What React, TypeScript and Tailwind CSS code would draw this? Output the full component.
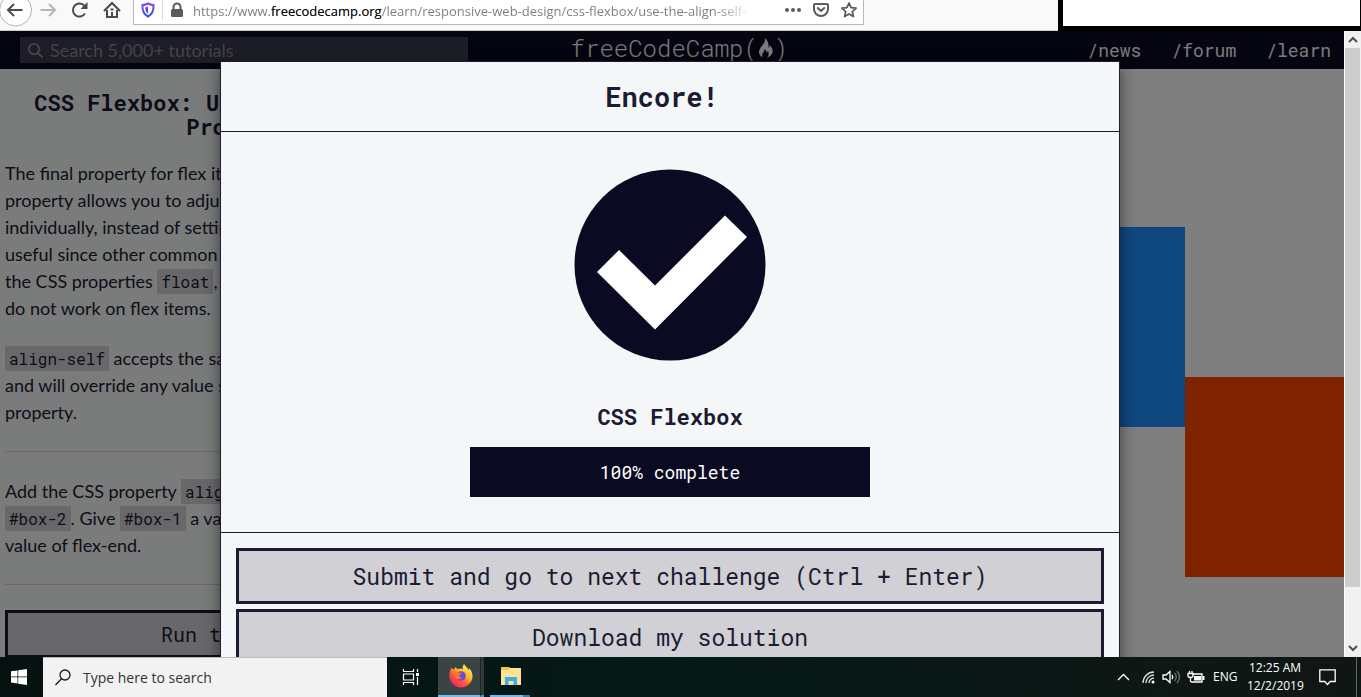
import type { ReactNode } from "react";

const mono = "font-['Roboto_Mono','Liberation_Mono',monospace]";
const ui = "font-['Open_Sans','Noto_Sans',sans-serif]";

function Code({ children }: { children: ReactNode }) {
  return (
    <code className={`${mono} bg-[#d0d0d5] px-1 py-[2px] text-base text-[#1b1b32]`}>{children}</code>
  );
}

function BrowserBar() {
  return (
    <header className="flex h-[31px] overflow-hidden bg-[#f9f9fa]">
      <div className="flex min-w-0 flex-1 items-start border-b border-[#ccc]">
        <nav className="flex w-[133px] shrink-0 items-start" aria-label="Browser">
          <button type="button" aria-label="Back" className="h-7 w-8">
            <svg width="32" height="28" viewBox="0 0 32 28" fill="none">
              <circle cx="15.500" cy="10" r="16" fill="#fff" stroke="#b1b1b3" />
              <path d="M22.500 10H8.500M14 4l-6 6 6 6" stroke="#4a4a4f" strokeWidth="2" />
            </svg>
          </button>
          <button type="button" aria-label="Forward" className="h-5 w-8">
            <svg width="32" height="20" viewBox="0 0 32 20" fill="none">
              <path d="M8.500 10h14M17 4l6 6-6 6" stroke="#b5b5b7" strokeWidth="2" />
            </svg>
          </button>
          <button type="button" aria-label="Reload" className="h-5 w-8">
            <svg width="32" height="20" viewBox="0 0 32 20" fill="none">
              <path d="M21 13.500A6.500 6.500 0 1 1 20.500 6" stroke="#4a4a4f" strokeWidth="2" />
              <path d="M23.500 2v7h-7z" fill="#4a4a4f" />
            </svg>
          </button>
          <button type="button" aria-label="Home" className="h-5 w-8">
            <svg width="32" height="20" viewBox="0 0 32 20" fill="none" stroke="#4a4a4f" strokeWidth="2">
              <path d="M8.500 10.500L16 3l7.500 7.500" strokeLinecap="round" />
              <path d="M11 10v7h10v-7" />
              <path d="M16 12v5M14.500 9.500h3" />
            </svg>
          </button>
        </nav>
        <div className="flex h-[25px] w-[731px] shrink-0 items-start border-x border-b border-[#b9b9bb] bg-white">
          <svg className="shrink-0" width="59" height="22" viewBox="0 0 59 22" fill="none">
            <defs>
              <linearGradient id="shield" x1="0" y1="0" x2="0" y2="1">
                <stop offset="0" stopColor="#8b45e8" />
                <stop offset="1" stopColor="#2d55dd" />
              </linearGradient>
            </defs>
            <path d="M14 3.500c2 1 4 1.500 5.500 1.500.3 5-.7 9-5.500 11.500C9.200 14 8.200 10 8.500 5c1.500 0 3.500-.5 5.500-1.500z" stroke="url(#shield)" strokeWidth="2" />
            <path d="M14 6.500c-1 .5-2 .8-2.800.9 0 2.700.7 4.800 2.800 6.300z" fill="url(#shield)" />
            <path d="M28.500 0v21" stroke="#dcdcde" />
            <rect x="37" y="9" width="12" height="8" rx="1.500" fill="#5b5b5f" />
            <path d="M39.500 10V7a3.500 3.500 0 0 1 7 0v3" stroke="#5b5b5f" strokeWidth="2" />
          </svg>
          <div
            role="textbox"
            aria-label="Address"
            className={`${ui} w-[560px] shrink-0 overflow-hidden whitespace-nowrap bg-gradient-to-r from-[#7b7b80] from-93% to-white bg-clip-text text-[13px] leading-[22px] text-transparent`}
          >
            https://www.<span className="text-[#0c0c0d]">freecodecamp.org</span>/learn/responsive-web-design/css-flexbox/use-the-align-self-
          </div>
          <div className="ml-auto flex gap-3 pr-[6px]">
            <button type="button" aria-label="Page actions">
              <svg width="16" height="20" viewBox="0 0 16 20" fill="#5b5b5f">
                <circle cx="2" cy="10" r="2" /><circle cx="8" cy="10" r="2" /><circle cx="14" cy="10" r="2" />
              </svg>
            </button>
            <button type="button" aria-label="Save to Pocket">
              <svg width="16" height="20" viewBox="0 0 16 20" fill="none" stroke="#5b5b5f" strokeWidth="2" strokeLinecap="round" strokeLinejoin="round">
                <path d="M2 4h12a1 1 0 0 1 1 1v4a7 7 0 0 1-14 0V5a1 1 0 0 1 1-1z" />
                <path d="M4.800 8L8 11l3.200-3" />
              </svg>
            </button>
            <button type="button" aria-label="Bookmark">
              <svg width="16" height="20" viewBox="0 0 16 20" fill="none" stroke="#5b5b5f" strokeWidth="1.800" strokeLinejoin="round">
                <path d="M8 3l2.100 4.700 5 .5-3.800 3.400 1.100 5L8 14l-4.400 2.600 1.100-5L.9 8.200l5-.5z" />
              </svg>
            </button>
          </div>
        </div>
      </div>
      <div className="w-[303px] shrink-0 border-r border-b-[5px] border-l-[5px] border-black bg-white" />
    </header>
  );
}

function SiteHeader() {
  return (
    <header className="grid h-[38px] grid-cols-[42%_auto_1fr] items-center bg-[#0a0a23] pr-[13px] pl-5">
      <label className="flex h-[26px] w-[448px] items-center gap-[7px] bg-[#3b3b4f] pl-2 font-[Lato,sans-serif]">
        <span className="sr-only">Search tutorials</span>
        <svg width="15" height="15" viewBox="0 0 15 15" fill="none" stroke="#a5a5ab" strokeWidth="1.300">
          <circle cx="6" cy="6" r="5.200" />
          <path d="M10 10l4.500 4.500" />
        </svg>
        <input placeholder="Search 5,000+ tutorials" className="h-full min-w-0 flex-1 bg-transparent text-lg leading-[26px] outline-none placeholder:text-[#858591]" />
      </label>
      <a href="#" className={`${mono} flex items-center pb-1 text-2xl leading-8 font-light text-[#f5f6f7]`}>
        freeCodeCamp(
        <svg width="16" height="22" viewBox="0 0 16 22" fill="currentColor">
          <path d="M7 1c.5 3-.7 4.500-2.500 7C2.500 10.700.8 13 1 15.500c.2 2.300 1.600 4 3.600 5C3.700 18.500 4 17 5.200 15.500c.9-1.100 1.400-2 1.300-3.500 1.500 1 2 2.300 1.900 3.700.9-.3 1.300-1 1.400-1.900 1.300 2.200 1.200 4.700-.8 6.700 3.200-.9 5.700-3.300 5.700-6.300 0-2.700-1.500-4.500-3-6.200.1 1.300-.1 2.500-1 3C10.800 7 10 3.500 7 1z" />
        </svg>
        )
      </a>
      <nav className={`${mono} flex justify-end gap-[30px] text-lg leading-6 text-[#f5f6f7]`}>
        <a href="#news">/news</a>
        <a href="#forum">/forum</a>
        <a href="#learn">/learn</a>
      </nav>
    </header>
  );
}

function Lesson() {
  return (
    <section className="flex w-[478px] shrink-0 flex-col bg-[#f5f6f7] px-[5px] pt-[22px] font-[Lato,sans-serif] text-lg leading-[27px] text-[#1b1b32]">
      <h1 className={`${mono} text-center text-[22px] leading-6 font-bold`}>CSS Flexbox: Use the align-self Property</h1>
      <p className="mt-[21px]">
        The final property for flex items is <Code>align-self</Code>. This<br />
        property allows you to adjust each item&apos;s alignment<br />
        individually, instead of setting them all at once. This is<br />
        useful since other common adjustment techniques using<br />
        the CSS properties <Code>float</Code>, <Code>clear</Code>, and <Code>vertical-align</Code><br />
        do not work on flex items.
      </p>
      <p className="mt-[23px]">
        <Code>align-self</Code> accepts the same values as <Code>align-items</Code><br />
        and will override any value set by the <Code>align-items</Code><br />
        property.
      </p>
      <hr className="mt-[25px] border-[#d0d0d5]" />
      <p className="mt-[26px]">
        Add the CSS property <Code>align-self</Code> to both <Code>#box-1</Code> and<br />
        <Code>#box-2</Code>. Give <Code>#box-1</Code> a value of center and give a<br />
        value of flex-end.
      </p>
      <hr className="mt-[25px] border-[#d0d0d5]" />
      <button type="button" className={`${mono} mt-[25px] h-12 shrink-0 border-[3px] border-[#1b1b32] bg-[#d0d0d5] text-xl`}>
        Run the Tests
      </button>
    </section>
  );
}

function CompletionDialog() {
  const action = `${mono} h-14 border-[3px] border-[#1b1b32] bg-[#d0d0d5] text-[23px] leading-8`;
  return (
    <div className="absolute inset-0 flex items-start justify-center overflow-hidden bg-black/50 pt-[30px] pr-1">
      <div
        role="dialog"
        aria-labelledby="dialog-title"
        className={`${mono} w-[900px] border border-[#1b1b32] bg-[#f5f6f7] text-[#1b1b32] shadow-[0_5px_15px_rgba(0,0,0,0.5)]`}
      >
        <h2 id="dialog-title" className="border-b border-[#1b1b32] py-[18px] pr-4 text-center text-[27px] leading-[33px] font-bold">
          Encore!
        </h2>
        <div className="flex flex-col items-center border-b border-[#1b1b32] pt-[37px] pb-[35px]">
          <svg width="192" height="192" viewBox="0 0 192 192">
            <circle cx="96" cy="96" r="95.500" fill="#0a0a23" />
            <path d="M23 103L45 81 81 116.500 151 46.500 173 68 81 160.500z" fill="#fff" />
          </svg>
          <h3 className="mt-11 text-[22px] leading-6 font-bold">CSS Flexbox</h3>
          <div role="progressbar" aria-valuenow={100} className="mt-[18px] h-[50px] w-[400px] bg-[#0a0a23] text-center text-lg leading-[50px] text-white">
            100% complete
          </div>
        </div>
        <div className="flex flex-col gap-[5px] p-[15px]">
          <button type="button" className={action}>Submit and go to next challenge (Ctrl + Enter)</button>
          <button type="button" className={action}>Download my solution</button>
        </div>
      </div>
    </div>
  );
}

function ScrollBar() {
  return (
    <div className="flex w-[17px] shrink-0 flex-col border-l border-white bg-[#f0f0f0]">
      <svg width="16" height="17" viewBox="0 0 16 17" fill="none" stroke="#505050" strokeWidth="2">
        <path d="M4 11l4-4 4 4" />
      </svg>
      <div className="mr-px h-[539px] bg-[#cdcdcd]" />
      <svg className="mt-auto" width="16" height="17" viewBox="0 0 16 17" fill="none" stroke="#505050" strokeWidth="2">
        <path d="M4 6l4 4 4-4" />
      </svg>
    </div>
  );
}

function Taskbar() {
  return (
    <footer className={`${ui} flex h-10 items-stretch bg-gradient-to-r from-[#04110f] via-[#051a17] to-[#101613] text-white`}>
      <button type="button" aria-label="Start" className="flex w-[43px] items-center pl-[11px]">
        <svg width="16" height="16" viewBox="0 0 16 16" fill="#fff">
          <path d="M0 2.300l6.500-.9v6.100H0zM7.200 1.300L16 0v7.500H7.200zM0 8.300h6.500v6.200L0 13.600zM7.200 8.300H16V16l-8.800-1.300z" />
        </svg>
      </button>
      <label className="flex w-[344px] items-center gap-3 border-t border-[#bbb] bg-[#f2f2f2] pl-3">
        <span className="sr-only">Search Windows</span>
        <svg width="16" height="17" viewBox="0 0 16 17" fill="none" stroke="#1a1a1a" strokeWidth="1.300">
          <circle cx="10" cy="6" r="5" />
          <path d="M6.500 9.700L.5 16" />
        </svg>
        <input placeholder="Type here to search" className="h-full min-w-0 flex-1 bg-transparent text-sm leading-6 outline-none placeholder:text-[#333]" />
      </label>
      <button type="button" aria-label="Task view" className="flex w-[51px] items-center pl-[15px]">
        <svg width="18" height="18" viewBox="0 0 18 18" fill="none" stroke="#fff" strokeWidth="1.200">
          <path d="M1.500 1v2.500h10V1M1.500 17v-2.500h10V17M1.500 6h10v6h-10zM15.500 1v3M15.500 9v8" />
          <path d="M14 5h3v3h-3z" fill="#fff" stroke="none" />
        </svg>
      </button>
      <button type="button" aria-label="Firefox" className="flex h-full">
        <span className="flex h-full w-[42px] items-center justify-center border-b-2 border-[#76b9ed] bg-[#3a4543] pl-1">
          <svg width="24" height="24" viewBox="0 0 24 24">
            <defs>
              <linearGradient id="fox" x1="0.800" y1="0.100" x2="0.200" y2="0.900">
                <stop offset="0" stopColor="#fff44f" />
                <stop offset="0.350" stopColor="#ffb52a" />
                <stop offset="0.650" stopColor="#ff5a36" />
                <stop offset="1" stopColor="#f0256b" />
              </linearGradient>
            </defs>
            <path d="M15 0c-1.500 2-1.600 3.500-1 5-1.600-.7-3.500-.8-5 0C8 4.800 7 4 6.800 3 5.800 3.700 5.200 4.500 5 5.500 4 5.200 3 4.500 2.600 3.500.8 6.500.3 9.500.5 12.500 1 19 6 23.500 12 23.500S23.500 18.500 23.500 12.500c0-3.500-1.300-6.500-3.500-8.500.2 1 .2 1.800 0 2.500C18.800 4 16.500 2.500 15 0z" fill="url(#fox)" />
            <circle cx="12" cy="12" r="4.800" fill="#7447d8" />
            <path d="M5.500 8.500c1.600-.9 3-.8 4.500.2l2.800.4c-.3 1.300-1.600 1.500-2.800 1.900.1 1.700 1.200 2.500 2.800 2.300-1.200 2.300-5 2.800-6.500.7-1-1.600-1.200-3.500-.8-5.500z" fill="#ff7a28" />
          </svg>
        </span>
        <span className="h-full w-1 border-b-2 border-l border-b-[#5b8fb8] border-l-[#1c2624] bg-[#2f3a38]" />
      </button>
      <button type="button" aria-label="File Explorer" className="ml-[6px] flex h-full">
        <span className="flex h-full w-[33px] items-center justify-end border-b-2 border-[#76b9ed]">
          <svg width="23" height="20" viewBox="0 0 23 20" className="shrink-0">
            <path d="M1 2V1h8l1 1h11v17H1z" fill="#ffe394" />
            <path d="M1 1h8v3H1z" fill="#f5c33b" />
            <path d="M5 19v-8h12v8h-3.500v-4h-5v4z" fill="#38aee4" />
          </svg>
        </span>
        <span className="h-full w-[7px] border-b-2 border-[#4a7da3]" />
      </button>
      <div className="ml-auto flex items-center text-xs leading-[18px]">
        <svg width="90" height="20" viewBox="0 0 90 20" fill="none" stroke="#fff" strokeWidth="1.300">
          <path d="M1 13l5.500-5.500L12 13" />
          <path d="M26 16A11 11 0 0 1 37 5M29 16a8 8 0 0 1 8-8M32 16a5 5 0 0 1 5-5" stroke="#ddd" />
          <circle cx="36" cy="15" r="1.500" fill="#fff" stroke="none" />
          <path d="M46 8h3l4-3.500v11L49 12h-3z" />
          <path d="M55 8q1.500 2 0 4" />
          <path d="M57.500 6q3.500 4 0 8M60 4q5 6 0 12" stroke="#667270" />
          <path d="M75 7h10v8H74" />
          <path d="M77 9h7v4.500h-7zM85.500 9h2v4h-2z" fill="#fff" stroke="none" />
          <path d="M71 6.500h5v2q0 2-2.500 2T71 8.500zM72.500 4v3M75 4v3M73.500 10v5" />
        </svg>
        <span className="ml-[6px] w-6">ENG</span>
        <time className="ml-[10px] w-14 text-center whitespace-nowrap">
          12:25 AM
          <br />
          12/2/2019
        </time>
        <button type="button" aria-label="Notifications" className="mr-5 ml-4">
          <svg width="17" height="17" viewBox="0 0 17 17" fill="none" stroke="#fff" strokeWidth="1.300">
            <path d="M.8.8h15.400v11.700h-5L8.500 15.500 5.800 12.500h-5z" />
          </svg>
        </button>
        <div className="mr-1 h-10 w-px bg-[#626866]" />
      </div>
    </footer>
  );
}

export default function App() {
  return (
    <div className="flex h-screen flex-col overflow-hidden">
      <BrowserBar />
      <div className="flex min-h-0 flex-1">
        <main className="relative flex min-w-0 flex-1 flex-col overflow-hidden bg-white">
          <SiteHeader />
          <div className="flex min-h-0 flex-1">
            <Lesson />
            <section aria-label="Preview" className="mt-2 flex h-[500px] flex-1 justify-end">
              <div className="h-[200px] w-[200px] self-center bg-[#1e90ff]" />
              <div className="h-[200px] w-[159px] self-end bg-[#ff4500]" />
            </section>
          </div>
          <CompletionDialog />
        </main>
        <ScrollBar />
      </div>
      <Taskbar />
    </div>
  );
}
